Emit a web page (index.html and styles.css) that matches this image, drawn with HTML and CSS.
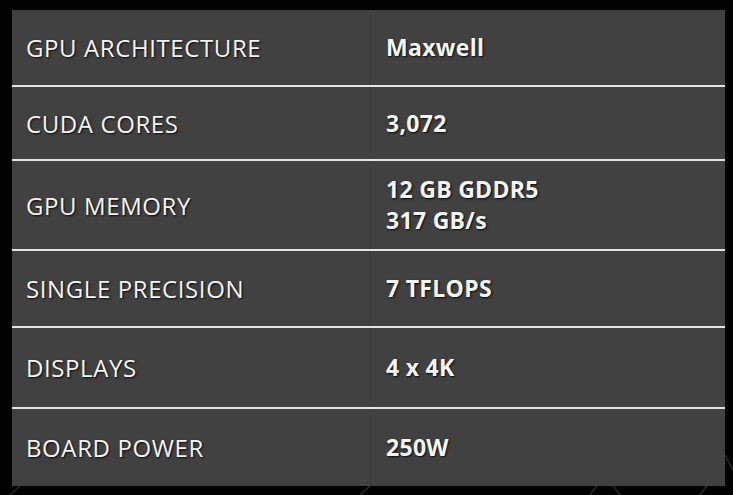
FILE: index.html
```html
<!DOCTYPE html>
<html>
<head>
<meta charset="utf-8">
<link rel="stylesheet" href="styles.css">
</head>
<body>
<div class="page">
  <svg class="bg-pattern" width="733" height="495" viewBox="0 0 733 495">
    <g stroke="#2a2a2a" stroke-width="1.5" fill="none">
      <path d="M590 495 L610 468"/>
      <path d="M620 495 L600 468"/>
      <path d="M700 495 L725 460"/>
      <path d="M733 470 L725 455"/>
      <path d="M360 495 L370 486"/>
      <path d="M10 495 L20 486"/>
    </g>
  </svg>
  <div class="specs">
    <div class="row r1"><div class="label">GPU ARCHITECTURE</div><div class="value">Maxwell</div></div>
    <div class="row r2"><div class="label">CUDA CORES</div><div class="value">3,072</div></div>
    <div class="row r3"><div class="label">GPU MEMORY</div><div class="value">12 GB GDDR5<br>317 GB/s</div></div>
    <div class="row r4"><div class="label">SINGLE PRECISION</div><div class="value">7 TFLOPS</div></div>
    <div class="row r5"><div class="label">DISPLAYS</div><div class="value">4 x 4K</div></div>
    <div class="row r6 last"><div class="label">BOARD POWER</div><div class="value">250W</div></div>
  </div>
</div>
</body>
</html>
```
FILE: styles.css
```css
html, body {
  margin: 0;
  padding: 0;
  background: #020202;
}
.page {
  position: relative;
  width: 733px;
  height: 495px;
  overflow: hidden;
  padding: 10px 0 0 12px;
  box-sizing: border-box;
}
.bg-pattern {
  position: absolute;
  left: 0;
  top: 0;
}
.specs {
  position: relative;
  width: 713px;
  background: #414141;
  font-family: "Open Sans", sans-serif;
  color: #f4f4f4;
  font-size: 23px;
  text-shadow: 1px 1px 2px rgba(0,0,0,0.85);
}
.row {
  display: grid;
  grid-template-columns: 359px 1fr;
  border-bottom: 2px solid #e4e4e4;
  box-sizing: border-box;
}
.row.last { border-bottom: none; }
.r1 { height: 77px; }
.r2 { height: 74px; }
.r3 { height: 90px; }
.r4 { height: 77px; }
.r5 { height: 81px; }
.r6 { height: 77px; }
.label, .value {
  display: flex;
  align-items: center;
  line-height: 31px;
}
.label {
  padding-left: 14px;
  border-right: 1px solid #3a3a3a;
  font-size: 24px;
  letter-spacing: 0.6px;
}
.value {
  padding-left: 15px;
  font-weight: 700;
  letter-spacing: 0.3px;
}
```
